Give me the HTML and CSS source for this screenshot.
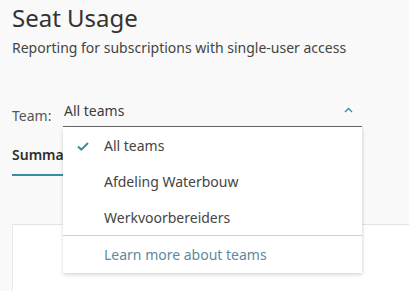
FILE: index.html
```html
<!DOCTYPE html>
<html lang="en">
<head>
<meta charset="utf-8">
<title>Seat Usage</title>
<link rel="stylesheet" href="styles.css">
</head>
<body>
<div class="page">
  <header class="header">
    <h1 class="title">Seat Usage</h1>
    <p class="subtitle">Reporting for subscriptions with single-user access</p>
  </header>

  <div class="filter">
    <span class="filter-label">Team:</span>
    <div class="select">
      <div class="select-field">
        <span class="select-value">All teams</span>
        <svg class="chevron" width="9" height="6" viewBox="0 0 9 6"><path d="M1 5 L4.5 1.5 L8 5" fill="none" stroke="#3a8ca3" stroke-width="1.4"/></svg>
      </div>
      <ul class="menu">
        <li class="menu-item selected">
          <svg class="check" width="12" height="9" viewBox="0 0 12 9"><path d="M1 4.5 L4.3 7.6 L11 1" fill="none" stroke="#3a8ca3" stroke-width="2"/></svg>
          <span>All teams</span>
        </li>
        <li class="menu-item"><span>Afdeling Waterbouw</span></li>
        <li class="menu-item"><span>Werkvoorbereiders</span></li>
        <li class="menu-item link"><span>Learn more about teams</span></li>
      </ul>
    </div>
  </div>

  <nav class="tabs">
    <span class="tab active">Summary</span>
  </nav>

  <section class="card"></section>
</div>
</body>
</html>
```

FILE: styles.css
```css
* { box-sizing: border-box; }
html, body { margin: 0; padding: 0; }
body {
  background: #f9f9f9;
  font-family: "Noto Sans", "Open Sans", sans-serif;
  color: #3c3c3c;
  width: 409px;
  height: 291px;
  overflow: hidden;
}
.page { padding-left: 12px; }
.header { padding-top: 3px; }
.title {
  margin: 0;
  font-size: 24px;
  font-weight: 400;
  line-height: 30px;
  color: #333;
}
.subtitle {
  margin: 6px 0 0;
  font-size: 14px;
  line-height: 18px;
  color: #444;
}
.filter {
  display: flex;
  align-items: flex-end;
  margin-top: 46px;
}
.filter-label {
  width: 51px;
  font-size: 14px;
  line-height: 18px;
  padding-bottom: 2px;
  color: #555;
}
.select { position: relative; width: 299px; }
.select-field {
  display: flex;
  align-items: center;
  justify-content: space-between;
  height: 24px;
  padding: 0 9px 7px 1px;
  border-bottom: 1px solid #6b6b6b;
}
.select-value { font-size: 14px; line-height: 18px; color: #3c3c3c; }
.chevron { display: block; margin-top: -2px; }
.menu {
  position: absolute;
  left: 0;
  top: 24px;
  width: 299px;
  margin: 0;
  padding: 0;
  list-style: none;
  background: #fff;
  box-shadow: 0 2px 4px rgba(0,0,0,0.14), 1px 0 3px rgba(0,0,0,0.06);
  z-index: 2;
}
.menu-item {
  position: relative;
  height: 36px;
  display: flex;
  align-items: center;
  padding-left: 41px;
  font-size: 14px;
  color: #444;
}
.check { position: absolute; left: 14px; top: 15px; }
.menu-item.link {
  height: 38px;
  border-top: 1px solid #cfcfcf;
  color: #5b8a9c;
}
.tabs { margin-top: 19px; display: flex; }
.tab {
  font-size: 14px;
  font-weight: 600;
  line-height: 18px;
  padding-bottom: 10px;
  border-bottom: 2px solid #3a8ca3;
  color: #2e2e2e;
}
.card {
  margin-top: 48px;
  height: 80px;
  background: #fff;
  border-top: 1px solid #e4e4e4;
  border-left: 1px solid #e8e8e8;
}
```
